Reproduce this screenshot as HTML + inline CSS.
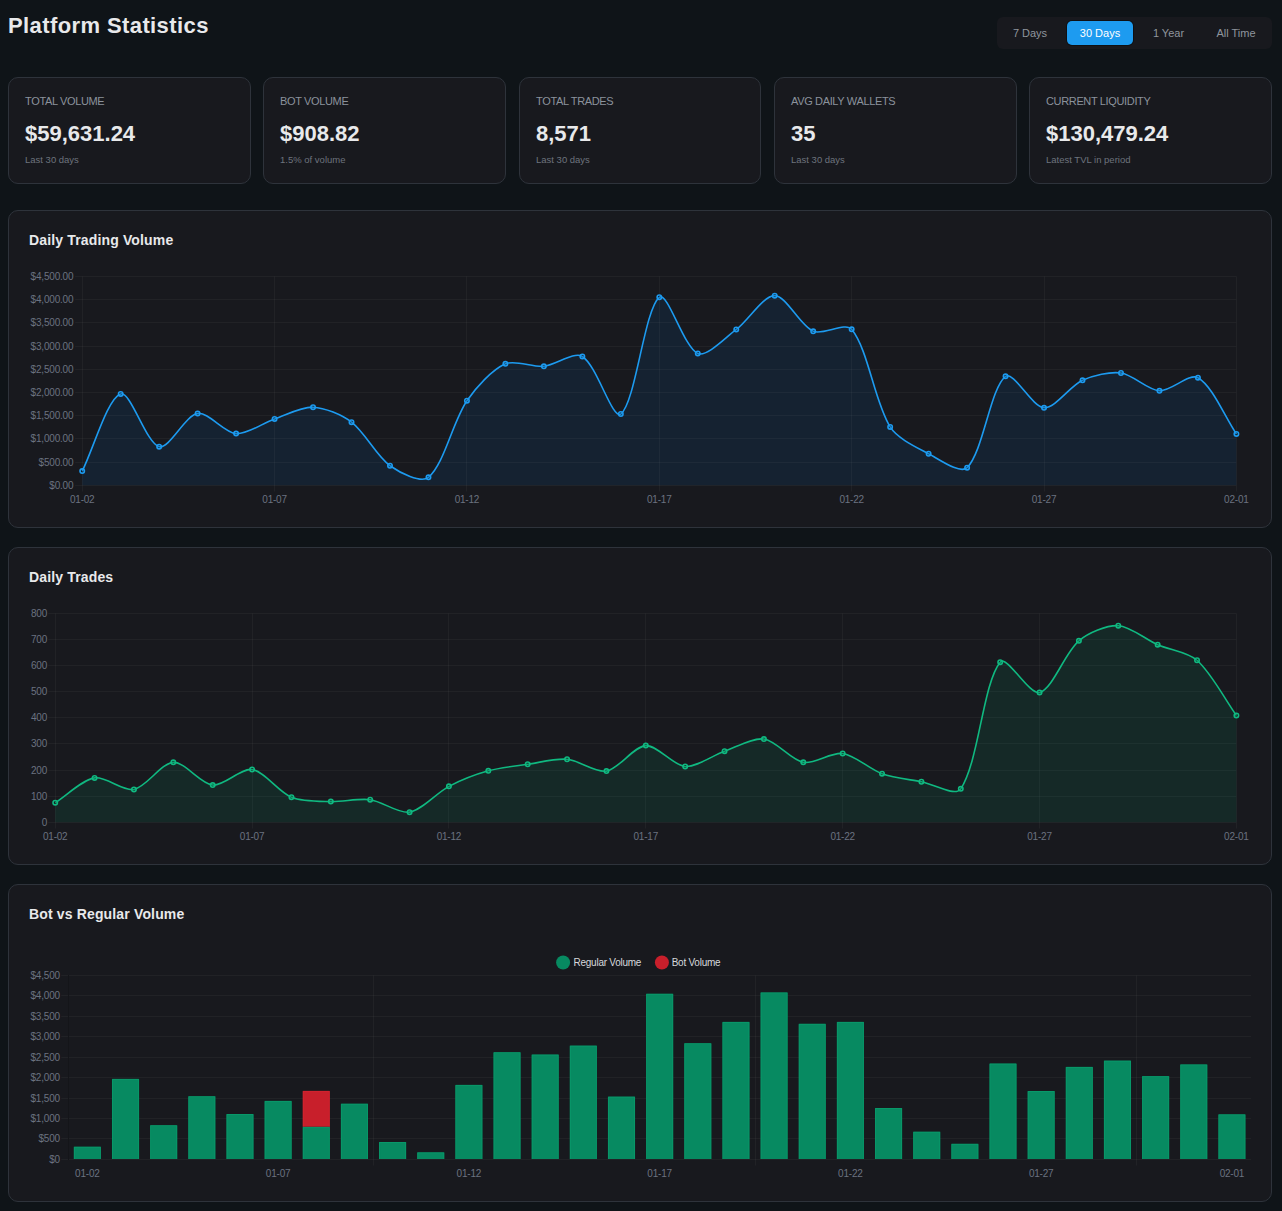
<!DOCTYPE html>
<html><head><meta charset="utf-8"><title>Platform Statistics</title>
<style>
*{box-sizing:border-box;margin:0;padding:0}
html,body{width:1282px;height:1211px;overflow:hidden;background:#0f1418;font-family:"Liberation Sans", sans-serif}
body{position:relative}
.abs{position:absolute}
h1{position:absolute;left:8px;top:15px;font-size:22px;line-height:22px;font-weight:bold;color:#e8e9eb;letter-spacing:0.4px;white-space:nowrap}
.range{position:absolute;left:997px;top:17px;width:275px;height:32px;border-radius:6px;background:#18191e}
.btn{position:absolute;top:21px;height:24px;font-size:11px;line-height:24px;text-align:center;color:#8f959d;border-radius:5px}
.btn.on{background:#1d9bf0;color:#fff;box-shadow:0 0 0 1px rgba(0,0,0,0.35)}
.stat{position:absolute;top:77px;width:243.2px;height:107px;background:#18191e;border:1px solid #2e333b;border-radius:10px}
.lbl{position:absolute;left:16px;top:18px;font-size:11px;line-height:11px;color:#8b929c;letter-spacing:-0.35px;white-space:nowrap}
.val{position:absolute;left:16px;top:45px;font-size:22px;line-height:22px;font-weight:bold;color:#e8e9eb;white-space:nowrap}
.sub{position:absolute;left:16px;top:77px;font-size:9.5px;line-height:9.5px;color:#6d737d;letter-spacing:0px;white-space:nowrap}
.chart{position:absolute;left:8px;width:1264px;height:318px;background:#18191e;border:1px solid #2e333b;border-radius:10px}
.ct{position:absolute;left:20px;top:22px;font-size:14px;line-height:14px;font-weight:bold;color:#e8e9eb;letter-spacing:0.15px;white-space:nowrap}
svg{position:absolute;left:0;top:0}
svg text{font-family:"Liberation Sans", sans-serif}
</style></head><body>
<h1>Platform Statistics</h1>
<div class="range"></div>
<div class="btn" style="left:1001px;width:58px">7 Days</div>
<div class="btn on" style="left:1067px;width:66px">30 Days</div>
<div class="btn" style="left:1139px;width:59px">1 Year</div>
<div class="btn" style="left:1203px;width:66px">All Time</div>
<div class="stat" style="left:8px;width:243px"><div class="lbl">TOTAL VOLUME</div><div class="val">$59,631.24</div><div class="sub">Last 30 days</div></div>
<div class="stat" style="left:263px;width:243px"><div class="lbl">BOT VOLUME</div><div class="val">$908.82</div><div class="sub">1.5% of volume</div></div>
<div class="stat" style="left:519px;width:242px"><div class="lbl">TOTAL TRADES</div><div class="val">8,571</div><div class="sub">Last 30 days</div></div>
<div class="stat" style="left:774px;width:243px"><div class="lbl">AVG DAILY WALLETS</div><div class="val">35</div><div class="sub">Last 30 days</div></div>
<div class="stat" style="left:1029px;width:243px"><div class="lbl">CURRENT LIQUIDITY</div><div class="val">$130,479.24</div><div class="sub">Latest TVL in period</div></div>

<div class="chart" style="top:210px"><div class="ct">Daily Trading Volume</div></div>
<div class="chart" style="top:547px"><div class="ct">Daily Trades</div></div>
<div class="chart" style="top:884px"><div class="ct">Bot vs Regular Volume</div></div>
<svg width="1282" height="1211" viewBox="0 0 1282 1211">
<line x1="75.2" y1="276.5" x2="1236.4" y2="276.5" stroke="rgba(255,255,255,0.038)" stroke-width="1"/>
<text x="73.30" y="280.00" text-anchor="end" font-size="10" fill="#6b7280" font-weight="normal" letter-spacing="-0.2">$4,500.00</text>
<line x1="75.2" y1="299.5" x2="1236.4" y2="299.5" stroke="rgba(255,255,255,0.038)" stroke-width="1"/>
<text x="73.30" y="303.00" text-anchor="end" font-size="10" fill="#6b7280" font-weight="normal" letter-spacing="-0.2">$4,000.00</text>
<line x1="75.2" y1="322.5" x2="1236.4" y2="322.5" stroke="rgba(255,255,255,0.038)" stroke-width="1"/>
<text x="73.30" y="326.00" text-anchor="end" font-size="10" fill="#6b7280" font-weight="normal" letter-spacing="-0.2">$3,500.00</text>
<line x1="75.2" y1="346.5" x2="1236.4" y2="346.5" stroke="rgba(255,255,255,0.038)" stroke-width="1"/>
<text x="73.30" y="350.00" text-anchor="end" font-size="10" fill="#6b7280" font-weight="normal" letter-spacing="-0.2">$3,000.00</text>
<line x1="75.2" y1="369.5" x2="1236.4" y2="369.5" stroke="rgba(255,255,255,0.038)" stroke-width="1"/>
<text x="73.30" y="373.00" text-anchor="end" font-size="10" fill="#6b7280" font-weight="normal" letter-spacing="-0.2">$2,500.00</text>
<line x1="75.2" y1="392.5" x2="1236.4" y2="392.5" stroke="rgba(255,255,255,0.038)" stroke-width="1"/>
<text x="73.30" y="396.00" text-anchor="end" font-size="10" fill="#6b7280" font-weight="normal" letter-spacing="-0.2">$2,000.00</text>
<line x1="75.2" y1="415.5" x2="1236.4" y2="415.5" stroke="rgba(255,255,255,0.038)" stroke-width="1"/>
<text x="73.30" y="419.00" text-anchor="end" font-size="10" fill="#6b7280" font-weight="normal" letter-spacing="-0.2">$1,500.00</text>
<line x1="75.2" y1="438.5" x2="1236.4" y2="438.5" stroke="rgba(255,255,255,0.038)" stroke-width="1"/>
<text x="73.30" y="442.00" text-anchor="end" font-size="10" fill="#6b7280" font-weight="normal" letter-spacing="-0.2">$1,000.00</text>
<line x1="75.2" y1="462.5" x2="1236.4" y2="462.5" stroke="rgba(255,255,255,0.038)" stroke-width="1"/>
<text x="73.30" y="466.00" text-anchor="end" font-size="10" fill="#6b7280" font-weight="normal" letter-spacing="-0.2">$500.00</text>
<line x1="75.2" y1="485.5" x2="1236.4" y2="485.5" stroke="rgba(255,255,255,0.038)" stroke-width="1"/>
<text x="73.30" y="489.00" text-anchor="end" font-size="10" fill="#6b7280" font-weight="normal" letter-spacing="-0.2">$0.00</text>
<line x1="82.5" y1="276.5" x2="82.5" y2="491.5" stroke="rgba(255,255,255,0.038)" stroke-width="1"/>
<text x="82.20" y="503.00" text-anchor="middle" font-size="10" fill="#6b7280" font-weight="normal" letter-spacing="-0.2">01-02</text>
<line x1="274.5" y1="276.5" x2="274.5" y2="491.5" stroke="rgba(255,255,255,0.038)" stroke-width="1"/>
<text x="274.57" y="503.00" text-anchor="middle" font-size="10" fill="#6b7280" font-weight="normal" letter-spacing="-0.2">01-07</text>
<line x1="466.5" y1="276.5" x2="466.5" y2="491.5" stroke="rgba(255,255,255,0.038)" stroke-width="1"/>
<text x="466.93" y="503.00" text-anchor="middle" font-size="10" fill="#6b7280" font-weight="normal" letter-spacing="-0.2">01-12</text>
<line x1="659.5" y1="276.5" x2="659.5" y2="491.5" stroke="rgba(255,255,255,0.038)" stroke-width="1"/>
<text x="659.30" y="503.00" text-anchor="middle" font-size="10" fill="#6b7280" font-weight="normal" letter-spacing="-0.2">01-17</text>
<line x1="851.5" y1="276.5" x2="851.5" y2="491.5" stroke="rgba(255,255,255,0.038)" stroke-width="1"/>
<text x="851.67" y="503.00" text-anchor="middle" font-size="10" fill="#6b7280" font-weight="normal" letter-spacing="-0.2">01-22</text>
<line x1="1044.5" y1="276.5" x2="1044.5" y2="491.5" stroke="rgba(255,255,255,0.038)" stroke-width="1"/>
<text x="1044.03" y="503.00" text-anchor="middle" font-size="10" fill="#6b7280" font-weight="normal" letter-spacing="-0.2">01-27</text>
<line x1="1236.5" y1="276.5" x2="1236.5" y2="491.5" stroke="rgba(255,255,255,0.038)" stroke-width="1"/>
<text x="1236.40" y="503.00" text-anchor="middle" font-size="10" fill="#6b7280" font-weight="normal" letter-spacing="-0.2">02-01</text>
<path d="M82.20,471.12 C93.74,447.96 107.53,398.08 120.67,393.91 C130.62,390.74 146.17,443.37 159.15,446.65 C169.25,449.21 185.17,415.50 197.62,413.40 C208.26,411.59 224.24,432.76 236.09,433.62 C247.32,434.43 262.89,422.97 274.57,418.95 C285.98,415.03 301.65,406.70 313.04,407.18 C324.73,407.66 341.93,414.84 351.51,422.14 C365.01,432.42 376.33,455.97 389.99,465.76 C399.42,472.52 421.09,483.52 428.46,477.29 C444.18,464.00 452.70,421.69 466.93,400.70 C475.79,387.64 492.01,369.79 505.41,363.80 C515.09,359.47 532.51,367.38 543.88,366.30 C555.59,365.18 573.94,351.24 582.35,356.46 C597.02,365.56 612.51,420.42 620.83,414.02 C635.59,402.66 644.44,308.97 659.30,297.27 C667.53,290.80 683.92,347.66 697.77,353.45 C707.00,357.31 725.41,337.59 736.25,329.45 C748.49,320.26 763.32,295.38 774.72,295.66 C786.40,295.94 799.88,325.50 813.19,331.33 C822.97,335.61 845.47,321.65 851.67,329.35 C868.55,350.33 874.19,401.16 890.14,426.95 C897.27,438.47 916.29,447.21 928.61,453.73 C939.37,459.43 960.34,474.46 967.09,467.68 C983.42,451.25 990.19,388.31 1005.56,376.34 C1013.27,370.34 1032.20,407.19 1044.03,407.80 C1055.29,408.38 1069.88,386.03 1082.51,380.32 C1092.96,375.59 1109.90,371.49 1120.98,373.00 C1132.98,374.64 1147.67,390.10 1159.45,390.82 C1170.75,391.51 1189.30,372.87 1197.93,377.70 C1212.39,385.80 1224.86,417.07 1236.40,433.94 L1236.40,485.30 L82.20,485.30 Z" fill="rgba(3,135,240,0.09)"/>
<path d="M82.20,471.12 C93.74,447.96 107.53,398.08 120.67,393.91 C130.62,390.74 146.17,443.37 159.15,446.65 C169.25,449.21 185.17,415.50 197.62,413.40 C208.26,411.59 224.24,432.76 236.09,433.62 C247.32,434.43 262.89,422.97 274.57,418.95 C285.98,415.03 301.65,406.70 313.04,407.18 C324.73,407.66 341.93,414.84 351.51,422.14 C365.01,432.42 376.33,455.97 389.99,465.76 C399.42,472.52 421.09,483.52 428.46,477.29 C444.18,464.00 452.70,421.69 466.93,400.70 C475.79,387.64 492.01,369.79 505.41,363.80 C515.09,359.47 532.51,367.38 543.88,366.30 C555.59,365.18 573.94,351.24 582.35,356.46 C597.02,365.56 612.51,420.42 620.83,414.02 C635.59,402.66 644.44,308.97 659.30,297.27 C667.53,290.80 683.92,347.66 697.77,353.45 C707.00,357.31 725.41,337.59 736.25,329.45 C748.49,320.26 763.32,295.38 774.72,295.66 C786.40,295.94 799.88,325.50 813.19,331.33 C822.97,335.61 845.47,321.65 851.67,329.35 C868.55,350.33 874.19,401.16 890.14,426.95 C897.27,438.47 916.29,447.21 928.61,453.73 C939.37,459.43 960.34,474.46 967.09,467.68 C983.42,451.25 990.19,388.31 1005.56,376.34 C1013.27,370.34 1032.20,407.19 1044.03,407.80 C1055.29,408.38 1069.88,386.03 1082.51,380.32 C1092.96,375.59 1109.90,371.49 1120.98,373.00 C1132.98,374.64 1147.67,390.10 1159.45,390.82 C1170.75,391.51 1189.30,372.87 1197.93,377.70 C1212.39,385.80 1224.86,417.07 1236.40,433.94" fill="none" stroke="#1d9bf0" stroke-width="1.6"/>
<circle cx="82.20" cy="471.12" r="2.2" fill="rgba(0,0,0,0.1)" stroke="#1d9bf0" stroke-width="1.6"/>
<circle cx="120.67" cy="393.91" r="2.2" fill="rgba(0,0,0,0.1)" stroke="#1d9bf0" stroke-width="1.6"/>
<circle cx="159.15" cy="446.65" r="2.2" fill="rgba(0,0,0,0.1)" stroke="#1d9bf0" stroke-width="1.6"/>
<circle cx="197.62" cy="413.40" r="2.2" fill="rgba(0,0,0,0.1)" stroke="#1d9bf0" stroke-width="1.6"/>
<circle cx="236.09" cy="433.62" r="2.2" fill="rgba(0,0,0,0.1)" stroke="#1d9bf0" stroke-width="1.6"/>
<circle cx="274.57" cy="418.95" r="2.2" fill="rgba(0,0,0,0.1)" stroke="#1d9bf0" stroke-width="1.6"/>
<circle cx="313.04" cy="407.18" r="2.2" fill="rgba(0,0,0,0.1)" stroke="#1d9bf0" stroke-width="1.6"/>
<circle cx="351.51" cy="422.14" r="2.2" fill="rgba(0,0,0,0.1)" stroke="#1d9bf0" stroke-width="1.6"/>
<circle cx="389.99" cy="465.76" r="2.2" fill="rgba(0,0,0,0.1)" stroke="#1d9bf0" stroke-width="1.6"/>
<circle cx="428.46" cy="477.29" r="2.2" fill="rgba(0,0,0,0.1)" stroke="#1d9bf0" stroke-width="1.6"/>
<circle cx="466.93" cy="400.70" r="2.2" fill="rgba(0,0,0,0.1)" stroke="#1d9bf0" stroke-width="1.6"/>
<circle cx="505.41" cy="363.80" r="2.2" fill="rgba(0,0,0,0.1)" stroke="#1d9bf0" stroke-width="1.6"/>
<circle cx="543.88" cy="366.30" r="2.2" fill="rgba(0,0,0,0.1)" stroke="#1d9bf0" stroke-width="1.6"/>
<circle cx="582.35" cy="356.46" r="2.2" fill="rgba(0,0,0,0.1)" stroke="#1d9bf0" stroke-width="1.6"/>
<circle cx="620.83" cy="414.02" r="2.2" fill="rgba(0,0,0,0.1)" stroke="#1d9bf0" stroke-width="1.6"/>
<circle cx="659.30" cy="297.27" r="2.2" fill="rgba(0,0,0,0.1)" stroke="#1d9bf0" stroke-width="1.6"/>
<circle cx="697.77" cy="353.45" r="2.2" fill="rgba(0,0,0,0.1)" stroke="#1d9bf0" stroke-width="1.6"/>
<circle cx="736.25" cy="329.45" r="2.2" fill="rgba(0,0,0,0.1)" stroke="#1d9bf0" stroke-width="1.6"/>
<circle cx="774.72" cy="295.66" r="2.2" fill="rgba(0,0,0,0.1)" stroke="#1d9bf0" stroke-width="1.6"/>
<circle cx="813.19" cy="331.33" r="2.2" fill="rgba(0,0,0,0.1)" stroke="#1d9bf0" stroke-width="1.6"/>
<circle cx="851.67" cy="329.35" r="2.2" fill="rgba(0,0,0,0.1)" stroke="#1d9bf0" stroke-width="1.6"/>
<circle cx="890.14" cy="426.95" r="2.2" fill="rgba(0,0,0,0.1)" stroke="#1d9bf0" stroke-width="1.6"/>
<circle cx="928.61" cy="453.73" r="2.2" fill="rgba(0,0,0,0.1)" stroke="#1d9bf0" stroke-width="1.6"/>
<circle cx="967.09" cy="467.68" r="2.2" fill="rgba(0,0,0,0.1)" stroke="#1d9bf0" stroke-width="1.6"/>
<circle cx="1005.56" cy="376.34" r="2.2" fill="rgba(0,0,0,0.1)" stroke="#1d9bf0" stroke-width="1.6"/>
<circle cx="1044.03" cy="407.80" r="2.2" fill="rgba(0,0,0,0.1)" stroke="#1d9bf0" stroke-width="1.6"/>
<circle cx="1082.51" cy="380.32" r="2.2" fill="rgba(0,0,0,0.1)" stroke="#1d9bf0" stroke-width="1.6"/>
<circle cx="1120.98" cy="373.00" r="2.2" fill="rgba(0,0,0,0.1)" stroke="#1d9bf0" stroke-width="1.6"/>
<circle cx="1159.45" cy="390.82" r="2.2" fill="rgba(0,0,0,0.1)" stroke="#1d9bf0" stroke-width="1.6"/>
<circle cx="1197.93" cy="377.70" r="2.2" fill="rgba(0,0,0,0.1)" stroke="#1d9bf0" stroke-width="1.6"/>
<circle cx="1236.40" cy="433.94" r="2.2" fill="rgba(0,0,0,0.1)" stroke="#1d9bf0" stroke-width="1.6"/>
<line x1="48.2" y1="613.5" x2="1236.4" y2="613.5" stroke="rgba(255,255,255,0.038)" stroke-width="1"/>
<text x="47.00" y="617.00" text-anchor="end" font-size="10" fill="#6b7280" font-weight="normal" letter-spacing="-0.2">800</text>
<line x1="48.2" y1="639.5" x2="1236.4" y2="639.5" stroke="rgba(255,255,255,0.038)" stroke-width="1"/>
<text x="47.00" y="643.00" text-anchor="end" font-size="10" fill="#6b7280" font-weight="normal" letter-spacing="-0.2">700</text>
<line x1="48.2" y1="665.5" x2="1236.4" y2="665.5" stroke="rgba(255,255,255,0.038)" stroke-width="1"/>
<text x="47.00" y="669.00" text-anchor="end" font-size="10" fill="#6b7280" font-weight="normal" letter-spacing="-0.2">600</text>
<line x1="48.2" y1="691.5" x2="1236.4" y2="691.5" stroke="rgba(255,255,255,0.038)" stroke-width="1"/>
<text x="47.00" y="695.00" text-anchor="end" font-size="10" fill="#6b7280" font-weight="normal" letter-spacing="-0.2">500</text>
<line x1="48.2" y1="717.5" x2="1236.4" y2="717.5" stroke="rgba(255,255,255,0.038)" stroke-width="1"/>
<text x="47.00" y="721.00" text-anchor="end" font-size="10" fill="#6b7280" font-weight="normal" letter-spacing="-0.2">400</text>
<line x1="48.2" y1="743.5" x2="1236.4" y2="743.5" stroke="rgba(255,255,255,0.038)" stroke-width="1"/>
<text x="47.00" y="747.00" text-anchor="end" font-size="10" fill="#6b7280" font-weight="normal" letter-spacing="-0.2">300</text>
<line x1="48.2" y1="770.5" x2="1236.4" y2="770.5" stroke="rgba(255,255,255,0.038)" stroke-width="1"/>
<text x="47.00" y="774.00" text-anchor="end" font-size="10" fill="#6b7280" font-weight="normal" letter-spacing="-0.2">200</text>
<line x1="48.2" y1="796.5" x2="1236.4" y2="796.5" stroke="rgba(255,255,255,0.038)" stroke-width="1"/>
<text x="47.00" y="800.00" text-anchor="end" font-size="10" fill="#6b7280" font-weight="normal" letter-spacing="-0.2">100</text>
<line x1="48.2" y1="822.5" x2="1236.4" y2="822.5" stroke="rgba(255,255,255,0.038)" stroke-width="1"/>
<text x="47.00" y="826.00" text-anchor="end" font-size="10" fill="#6b7280" font-weight="normal" letter-spacing="-0.2">0</text>
<line x1="55.5" y1="613.5" x2="55.5" y2="828.5" stroke="rgba(255,255,255,0.038)" stroke-width="1"/>
<text x="55.20" y="840.00" text-anchor="middle" font-size="10" fill="#6b7280" font-weight="normal" letter-spacing="-0.2">01-02</text>
<line x1="252.5" y1="613.5" x2="252.5" y2="828.5" stroke="rgba(255,255,255,0.038)" stroke-width="1"/>
<text x="252.07" y="840.00" text-anchor="middle" font-size="10" fill="#6b7280" font-weight="normal" letter-spacing="-0.2">01-07</text>
<line x1="448.5" y1="613.5" x2="448.5" y2="828.5" stroke="rgba(255,255,255,0.038)" stroke-width="1"/>
<text x="448.93" y="840.00" text-anchor="middle" font-size="10" fill="#6b7280" font-weight="normal" letter-spacing="-0.2">01-12</text>
<line x1="645.5" y1="613.5" x2="645.5" y2="828.5" stroke="rgba(255,255,255,0.038)" stroke-width="1"/>
<text x="645.80" y="840.00" text-anchor="middle" font-size="10" fill="#6b7280" font-weight="normal" letter-spacing="-0.2">01-17</text>
<line x1="842.5" y1="613.5" x2="842.5" y2="828.5" stroke="rgba(255,255,255,0.038)" stroke-width="1"/>
<text x="842.67" y="840.00" text-anchor="middle" font-size="10" fill="#6b7280" font-weight="normal" letter-spacing="-0.2">01-22</text>
<line x1="1039.5" y1="613.5" x2="1039.5" y2="828.5" stroke="rgba(255,255,255,0.038)" stroke-width="1"/>
<text x="1039.53" y="840.00" text-anchor="middle" font-size="10" fill="#6b7280" font-weight="normal" letter-spacing="-0.2">01-27</text>
<line x1="1236.5" y1="613.5" x2="1236.5" y2="828.5" stroke="rgba(255,255,255,0.038)" stroke-width="1"/>
<text x="1236.40" y="840.00" text-anchor="middle" font-size="10" fill="#6b7280" font-weight="normal" letter-spacing="-0.2">02-01</text>
<path d="M55.20,802.68 C67.01,795.24 82.02,779.99 94.57,777.88 C105.64,776.02 123.03,791.59 133.95,789.43 C146.66,786.93 161.21,763.02 173.32,762.34 C184.84,761.70 200.46,783.94 212.69,785.05 C224.08,786.09 241.01,767.81 252.07,769.51 C264.64,771.45 278.48,791.92 291.44,797.20 C302.11,801.55 318.97,801.21 330.81,801.58 C342.60,801.96 358.65,798.15 370.19,799.69 C382.27,801.31 398.52,814.01 409.56,812.14 C422.14,810.01 436.49,792.87 448.93,786.35 C460.12,780.48 476.15,774.22 488.31,770.81 C499.77,767.59 515.83,765.97 527.68,764.24 C539.46,762.51 555.45,758.24 567.05,759.26 C579.07,760.31 595.39,773.02 606.43,771.11 C619.02,768.93 633.68,746.33 645.80,745.61 C657.31,744.93 673.05,765.57 685.17,766.43 C696.67,767.24 712.59,755.35 724.55,751.19 C736.22,747.13 752.73,737.45 763.92,739.04 C776.35,740.80 790.74,760.04 803.29,762.34 C814.37,764.37 831.40,751.86 842.67,753.48 C855.02,755.26 869.66,769.25 882.04,773.70 C893.28,777.74 909.57,779.49 921.41,781.76 C933.20,784.03 955.31,797.15 960.79,788.84 C978.94,761.27 982.97,683.19 1000.16,662.15 C1006.60,654.27 1029.29,695.20 1039.53,692.43 C1052.92,688.81 1064.59,652.97 1078.91,640.84 C1088.21,632.95 1106.68,625.13 1118.28,625.70 C1130.30,626.29 1145.65,639.45 1157.65,644.72 C1169.27,649.82 1187.95,652.10 1197.03,660.26 C1211.57,673.32 1224.59,698.88 1236.40,715.43 L1236.40,822.30 L55.20,822.30 Z" fill="rgba(4,185,129,0.1)"/>
<path d="M55.20,802.68 C67.01,795.24 82.02,779.99 94.57,777.88 C105.64,776.02 123.03,791.59 133.95,789.43 C146.66,786.93 161.21,763.02 173.32,762.34 C184.84,761.70 200.46,783.94 212.69,785.05 C224.08,786.09 241.01,767.81 252.07,769.51 C264.64,771.45 278.48,791.92 291.44,797.20 C302.11,801.55 318.97,801.21 330.81,801.58 C342.60,801.96 358.65,798.15 370.19,799.69 C382.27,801.31 398.52,814.01 409.56,812.14 C422.14,810.01 436.49,792.87 448.93,786.35 C460.12,780.48 476.15,774.22 488.31,770.81 C499.77,767.59 515.83,765.97 527.68,764.24 C539.46,762.51 555.45,758.24 567.05,759.26 C579.07,760.31 595.39,773.02 606.43,771.11 C619.02,768.93 633.68,746.33 645.80,745.61 C657.31,744.93 673.05,765.57 685.17,766.43 C696.67,767.24 712.59,755.35 724.55,751.19 C736.22,747.13 752.73,737.45 763.92,739.04 C776.35,740.80 790.74,760.04 803.29,762.34 C814.37,764.37 831.40,751.86 842.67,753.48 C855.02,755.26 869.66,769.25 882.04,773.70 C893.28,777.74 909.57,779.49 921.41,781.76 C933.20,784.03 955.31,797.15 960.79,788.84 C978.94,761.27 982.97,683.19 1000.16,662.15 C1006.60,654.27 1029.29,695.20 1039.53,692.43 C1052.92,688.81 1064.59,652.97 1078.91,640.84 C1088.21,632.95 1106.68,625.13 1118.28,625.70 C1130.30,626.29 1145.65,639.45 1157.65,644.72 C1169.27,649.82 1187.95,652.10 1197.03,660.26 C1211.57,673.32 1224.59,698.88 1236.40,715.43" fill="none" stroke="#10b981" stroke-width="1.6"/>
<circle cx="55.20" cy="802.68" r="2.2" fill="rgba(0,0,0,0.1)" stroke="#10b981" stroke-width="1.6"/>
<circle cx="94.57" cy="777.88" r="2.2" fill="rgba(0,0,0,0.1)" stroke="#10b981" stroke-width="1.6"/>
<circle cx="133.95" cy="789.43" r="2.2" fill="rgba(0,0,0,0.1)" stroke="#10b981" stroke-width="1.6"/>
<circle cx="173.32" cy="762.34" r="2.2" fill="rgba(0,0,0,0.1)" stroke="#10b981" stroke-width="1.6"/>
<circle cx="212.69" cy="785.05" r="2.2" fill="rgba(0,0,0,0.1)" stroke="#10b981" stroke-width="1.6"/>
<circle cx="252.07" cy="769.51" r="2.2" fill="rgba(0,0,0,0.1)" stroke="#10b981" stroke-width="1.6"/>
<circle cx="291.44" cy="797.20" r="2.2" fill="rgba(0,0,0,0.1)" stroke="#10b981" stroke-width="1.6"/>
<circle cx="330.81" cy="801.58" r="2.2" fill="rgba(0,0,0,0.1)" stroke="#10b981" stroke-width="1.6"/>
<circle cx="370.19" cy="799.69" r="2.2" fill="rgba(0,0,0,0.1)" stroke="#10b981" stroke-width="1.6"/>
<circle cx="409.56" cy="812.14" r="2.2" fill="rgba(0,0,0,0.1)" stroke="#10b981" stroke-width="1.6"/>
<circle cx="448.93" cy="786.35" r="2.2" fill="rgba(0,0,0,0.1)" stroke="#10b981" stroke-width="1.6"/>
<circle cx="488.31" cy="770.81" r="2.2" fill="rgba(0,0,0,0.1)" stroke="#10b981" stroke-width="1.6"/>
<circle cx="527.68" cy="764.24" r="2.2" fill="rgba(0,0,0,0.1)" stroke="#10b981" stroke-width="1.6"/>
<circle cx="567.05" cy="759.26" r="2.2" fill="rgba(0,0,0,0.1)" stroke="#10b981" stroke-width="1.6"/>
<circle cx="606.43" cy="771.11" r="2.2" fill="rgba(0,0,0,0.1)" stroke="#10b981" stroke-width="1.6"/>
<circle cx="645.80" cy="745.61" r="2.2" fill="rgba(0,0,0,0.1)" stroke="#10b981" stroke-width="1.6"/>
<circle cx="685.17" cy="766.43" r="2.2" fill="rgba(0,0,0,0.1)" stroke="#10b981" stroke-width="1.6"/>
<circle cx="724.55" cy="751.19" r="2.2" fill="rgba(0,0,0,0.1)" stroke="#10b981" stroke-width="1.6"/>
<circle cx="763.92" cy="739.04" r="2.2" fill="rgba(0,0,0,0.1)" stroke="#10b981" stroke-width="1.6"/>
<circle cx="803.29" cy="762.34" r="2.2" fill="rgba(0,0,0,0.1)" stroke="#10b981" stroke-width="1.6"/>
<circle cx="842.67" cy="753.48" r="2.2" fill="rgba(0,0,0,0.1)" stroke="#10b981" stroke-width="1.6"/>
<circle cx="882.04" cy="773.70" r="2.2" fill="rgba(0,0,0,0.1)" stroke="#10b981" stroke-width="1.6"/>
<circle cx="921.41" cy="781.76" r="2.2" fill="rgba(0,0,0,0.1)" stroke="#10b981" stroke-width="1.6"/>
<circle cx="960.79" cy="788.84" r="2.2" fill="rgba(0,0,0,0.1)" stroke="#10b981" stroke-width="1.6"/>
<circle cx="1000.16" cy="662.15" r="2.2" fill="rgba(0,0,0,0.1)" stroke="#10b981" stroke-width="1.6"/>
<circle cx="1039.53" cy="692.43" r="2.2" fill="rgba(0,0,0,0.1)" stroke="#10b981" stroke-width="1.6"/>
<circle cx="1078.91" cy="640.84" r="2.2" fill="rgba(0,0,0,0.1)" stroke="#10b981" stroke-width="1.6"/>
<circle cx="1118.28" cy="625.70" r="2.2" fill="rgba(0,0,0,0.1)" stroke="#10b981" stroke-width="1.6"/>
<circle cx="1157.65" cy="644.72" r="2.2" fill="rgba(0,0,0,0.1)" stroke="#10b981" stroke-width="1.6"/>
<circle cx="1197.03" cy="660.26" r="2.2" fill="rgba(0,0,0,0.1)" stroke="#10b981" stroke-width="1.6"/>
<circle cx="1236.40" cy="715.43" r="2.2" fill="rgba(0,0,0,0.1)" stroke="#10b981" stroke-width="1.6"/>
<line x1="61.3" y1="975.5" x2="1251.0" y2="975.5" stroke="rgba(255,255,255,0.038)" stroke-width="1"/>
<text x="59.90" y="979.00" text-anchor="end" font-size="10" fill="#6b7280" font-weight="normal" letter-spacing="-0.2">$4,500</text>
<line x1="61.3" y1="995.5" x2="1251.0" y2="995.5" stroke="rgba(255,255,255,0.038)" stroke-width="1"/>
<text x="59.90" y="999.00" text-anchor="end" font-size="10" fill="#6b7280" font-weight="normal" letter-spacing="-0.2">$4,000</text>
<line x1="61.3" y1="1016.5" x2="1251.0" y2="1016.5" stroke="rgba(255,255,255,0.038)" stroke-width="1"/>
<text x="59.90" y="1020.00" text-anchor="end" font-size="10" fill="#6b7280" font-weight="normal" letter-spacing="-0.2">$3,500</text>
<line x1="61.3" y1="1036.5" x2="1251.0" y2="1036.5" stroke="rgba(255,255,255,0.038)" stroke-width="1"/>
<text x="59.90" y="1040.00" text-anchor="end" font-size="10" fill="#6b7280" font-weight="normal" letter-spacing="-0.2">$3,000</text>
<line x1="61.3" y1="1057.5" x2="1251.0" y2="1057.5" stroke="rgba(255,255,255,0.038)" stroke-width="1"/>
<text x="59.90" y="1061.00" text-anchor="end" font-size="10" fill="#6b7280" font-weight="normal" letter-spacing="-0.2">$2,500</text>
<line x1="61.3" y1="1077.5" x2="1251.0" y2="1077.5" stroke="rgba(255,255,255,0.038)" stroke-width="1"/>
<text x="59.90" y="1081.00" text-anchor="end" font-size="10" fill="#6b7280" font-weight="normal" letter-spacing="-0.2">$2,000</text>
<line x1="61.3" y1="1098.5" x2="1251.0" y2="1098.5" stroke="rgba(255,255,255,0.038)" stroke-width="1"/>
<text x="59.90" y="1102.00" text-anchor="end" font-size="10" fill="#6b7280" font-weight="normal" letter-spacing="-0.2">$1,500</text>
<line x1="61.3" y1="1118.5" x2="1251.0" y2="1118.5" stroke="rgba(255,255,255,0.038)" stroke-width="1"/>
<text x="59.90" y="1122.00" text-anchor="end" font-size="10" fill="#6b7280" font-weight="normal" letter-spacing="-0.2">$1,000</text>
<line x1="61.3" y1="1138.5" x2="1251.0" y2="1138.5" stroke="rgba(255,255,255,0.038)" stroke-width="1"/>
<text x="59.90" y="1142.00" text-anchor="end" font-size="10" fill="#6b7280" font-weight="normal" letter-spacing="-0.2">$500</text>
<line x1="61.3" y1="1159.5" x2="1251.0" y2="1159.5" stroke="rgba(255,255,255,0.038)" stroke-width="1"/>
<text x="59.90" y="1163.00" text-anchor="end" font-size="10" fill="#6b7280" font-weight="normal" letter-spacing="-0.2">$0</text>
<line x1="373.5" y1="975.5" x2="373.5" y2="1165.5" stroke="rgba(255,255,255,0.038)" stroke-width="1"/>
<line x1="755.5" y1="975.5" x2="755.5" y2="1165.5" stroke="rgba(255,255,255,0.038)" stroke-width="1"/>
<line x1="1136.5" y1="975.5" x2="1136.5" y2="1165.5" stroke="rgba(255,255,255,0.038)" stroke-width="1"/>
<line x1="68.5" y1="975.0" x2="68.5" y2="1160.0" stroke="#141519" stroke-width="1"/>
<text x="87.38" y="1177.00" text-anchor="middle" font-size="10" fill="#6b7280" font-weight="normal" letter-spacing="-0.2">01-02</text>
<text x="278.13" y="1177.00" text-anchor="middle" font-size="10" fill="#6b7280" font-weight="normal" letter-spacing="-0.2">01-07</text>
<text x="468.89" y="1177.00" text-anchor="middle" font-size="10" fill="#6b7280" font-weight="normal" letter-spacing="-0.2">01-12</text>
<text x="659.65" y="1177.00" text-anchor="middle" font-size="10" fill="#6b7280" font-weight="normal" letter-spacing="-0.2">01-17</text>
<text x="850.41" y="1177.00" text-anchor="middle" font-size="10" fill="#6b7280" font-weight="normal" letter-spacing="-0.2">01-22</text>
<text x="1041.17" y="1177.00" text-anchor="middle" font-size="10" fill="#6b7280" font-weight="normal" letter-spacing="-0.2">01-27</text>
<text x="1231.92" y="1177.00" text-anchor="middle" font-size="10" fill="#6b7280" font-weight="normal" letter-spacing="-0.2">02-01</text>
<rect x="73.83" y="1146.70" width="27.10" height="12.30" fill="#078a61"/>
<path d="M74.33,1159 V1147.20 H100.43 V1159" fill="none" stroke="#0aa874" stroke-opacity="0.45" stroke-width="1"/>
<rect x="111.98" y="1078.90" width="27.10" height="80.10" fill="#078a61"/>
<path d="M112.48,1159 V1079.40 H138.58 V1159" fill="none" stroke="#0aa874" stroke-opacity="0.45" stroke-width="1"/>
<rect x="150.13" y="1125.20" width="27.10" height="33.80" fill="#078a61"/>
<path d="M150.63,1159 V1125.70 H176.73 V1159" fill="none" stroke="#0aa874" stroke-opacity="0.45" stroke-width="1"/>
<rect x="188.28" y="1096.20" width="27.10" height="62.80" fill="#078a61"/>
<path d="M188.78,1159 V1096.70 H214.88 V1159" fill="none" stroke="#0aa874" stroke-opacity="0.45" stroke-width="1"/>
<rect x="226.43" y="1114.00" width="27.10" height="45.00" fill="#078a61"/>
<path d="M226.93,1159 V1114.50 H253.03 V1159" fill="none" stroke="#0aa874" stroke-opacity="0.45" stroke-width="1"/>
<rect x="264.58" y="1100.90" width="27.10" height="58.10" fill="#078a61"/>
<path d="M265.08,1159 V1101.40 H291.18 V1159" fill="none" stroke="#0aa874" stroke-opacity="0.45" stroke-width="1"/>
<rect x="302.74" y="1126.70" width="27.10" height="32.30" fill="#078a61"/>
<path d="M303.24,1159 V1127.20 H329.34 V1159" fill="none" stroke="#0aa874" stroke-opacity="0.45" stroke-width="1"/>
<rect x="302.74" y="1090.90" width="27.10" height="35.80" fill="#c81f2b"/>
<path d="M303.24,1126.70 V1091.40 H329.34 V1126.70" fill="none" stroke="#dc2a36" stroke-opacity="0.45" stroke-width="1"/>
<rect x="340.89" y="1103.70" width="27.10" height="55.30" fill="#078a61"/>
<path d="M341.39,1159 V1104.20 H367.49 V1159" fill="none" stroke="#0aa874" stroke-opacity="0.45" stroke-width="1"/>
<rect x="379.04" y="1142.00" width="27.10" height="17.00" fill="#078a61"/>
<path d="M379.54,1159 V1142.50 H405.64 V1159" fill="none" stroke="#0aa874" stroke-opacity="0.45" stroke-width="1"/>
<rect x="417.19" y="1152.30" width="27.10" height="6.70" fill="#078a61"/>
<path d="M417.69,1159 V1152.80 H443.79 V1159" fill="none" stroke="#0aa874" stroke-opacity="0.45" stroke-width="1"/>
<rect x="455.34" y="1084.90" width="27.10" height="74.10" fill="#078a61"/>
<path d="M455.84,1159 V1085.40 H481.94 V1159" fill="none" stroke="#0aa874" stroke-opacity="0.45" stroke-width="1"/>
<rect x="493.49" y="1052.20" width="27.10" height="106.80" fill="#078a61"/>
<path d="M493.99,1159 V1052.70 H520.09 V1159" fill="none" stroke="#0aa874" stroke-opacity="0.45" stroke-width="1"/>
<rect x="531.65" y="1054.50" width="27.10" height="104.50" fill="#078a61"/>
<path d="M532.15,1159 V1055.00 H558.25 V1159" fill="none" stroke="#0aa874" stroke-opacity="0.45" stroke-width="1"/>
<rect x="569.80" y="1045.60" width="27.10" height="113.40" fill="#078a61"/>
<path d="M570.30,1159 V1046.10 H596.40 V1159" fill="none" stroke="#0aa874" stroke-opacity="0.45" stroke-width="1"/>
<rect x="607.95" y="1096.60" width="27.10" height="62.40" fill="#078a61"/>
<path d="M608.45,1159 V1097.10 H634.55 V1159" fill="none" stroke="#0aa874" stroke-opacity="0.45" stroke-width="1"/>
<rect x="646.10" y="993.75" width="27.10" height="165.25" fill="#078a61"/>
<path d="M646.60,1159 V994.25 H672.70 V1159" fill="none" stroke="#0aa874" stroke-opacity="0.45" stroke-width="1"/>
<rect x="684.25" y="1043.20" width="27.10" height="115.80" fill="#078a61"/>
<path d="M684.75,1159 V1043.70 H710.85 V1159" fill="none" stroke="#0aa874" stroke-opacity="0.45" stroke-width="1"/>
<rect x="722.40" y="1021.90" width="27.10" height="137.10" fill="#078a61"/>
<path d="M722.90,1159 V1022.40 H749.00 V1159" fill="none" stroke="#0aa874" stroke-opacity="0.45" stroke-width="1"/>
<rect x="760.55" y="992.40" width="27.10" height="166.60" fill="#078a61"/>
<path d="M761.05,1159 V992.90 H787.15 V1159" fill="none" stroke="#0aa874" stroke-opacity="0.45" stroke-width="1"/>
<rect x="798.71" y="1023.80" width="27.10" height="135.20" fill="#078a61"/>
<path d="M799.21,1159 V1024.30 H825.31 V1159" fill="none" stroke="#0aa874" stroke-opacity="0.45" stroke-width="1"/>
<rect x="836.86" y="1021.90" width="27.10" height="137.10" fill="#078a61"/>
<path d="M837.36,1159 V1022.40 H863.46 V1159" fill="none" stroke="#0aa874" stroke-opacity="0.45" stroke-width="1"/>
<rect x="875.01" y="1108.00" width="27.10" height="51.00" fill="#078a61"/>
<path d="M875.51,1159 V1108.50 H901.61 V1159" fill="none" stroke="#0aa874" stroke-opacity="0.45" stroke-width="1"/>
<rect x="913.16" y="1131.70" width="27.10" height="27.30" fill="#078a61"/>
<path d="M913.66,1159 V1132.20 H939.76 V1159" fill="none" stroke="#0aa874" stroke-opacity="0.45" stroke-width="1"/>
<rect x="951.31" y="1143.80" width="27.10" height="15.20" fill="#078a61"/>
<path d="M951.81,1159 V1144.30 H977.91 V1159" fill="none" stroke="#0aa874" stroke-opacity="0.45" stroke-width="1"/>
<rect x="989.46" y="1063.50" width="27.10" height="95.50" fill="#078a61"/>
<path d="M989.96,1159 V1064.00 H1016.06 V1159" fill="none" stroke="#0aa874" stroke-opacity="0.45" stroke-width="1"/>
<rect x="1027.62" y="1091.00" width="27.10" height="68.00" fill="#078a61"/>
<path d="M1028.12,1159 V1091.50 H1054.22 V1159" fill="none" stroke="#0aa874" stroke-opacity="0.45" stroke-width="1"/>
<rect x="1065.77" y="1066.90" width="27.10" height="92.10" fill="#078a61"/>
<path d="M1066.27,1159 V1067.40 H1092.37 V1159" fill="none" stroke="#0aa874" stroke-opacity="0.45" stroke-width="1"/>
<rect x="1103.92" y="1060.60" width="27.10" height="98.40" fill="#078a61"/>
<path d="M1104.42,1159 V1061.10 H1130.52 V1159" fill="none" stroke="#0aa874" stroke-opacity="0.45" stroke-width="1"/>
<rect x="1142.07" y="1076.10" width="27.10" height="82.90" fill="#078a61"/>
<path d="M1142.57,1159 V1076.60 H1168.67 V1159" fill="none" stroke="#0aa874" stroke-opacity="0.45" stroke-width="1"/>
<rect x="1180.22" y="1064.40" width="27.10" height="94.60" fill="#078a61"/>
<path d="M1180.72,1159 V1064.90 H1206.82 V1159" fill="none" stroke="#0aa874" stroke-opacity="0.45" stroke-width="1"/>
<rect x="1218.37" y="1114.30" width="27.10" height="44.70" fill="#078a61"/>
<path d="M1218.87,1159 V1114.80 H1244.97 V1159" fill="none" stroke="#0aa874" stroke-opacity="0.45" stroke-width="1"/>
<circle cx="563.1" cy="962.5" r="7" fill="#078a61"/>
<text x="573.50" y="965.60" text-anchor="start" font-size="10" fill="#d6d8dc" font-weight="normal" letter-spacing="-0.25">Regular Volume</text>
<circle cx="661.9" cy="962.5" r="7" fill="#c81f2b"/>
<text x="671.70" y="965.60" text-anchor="start" font-size="10" fill="#d6d8dc" font-weight="normal" letter-spacing="-0.25">Bot Volume</text>
</svg>
</body></html>
